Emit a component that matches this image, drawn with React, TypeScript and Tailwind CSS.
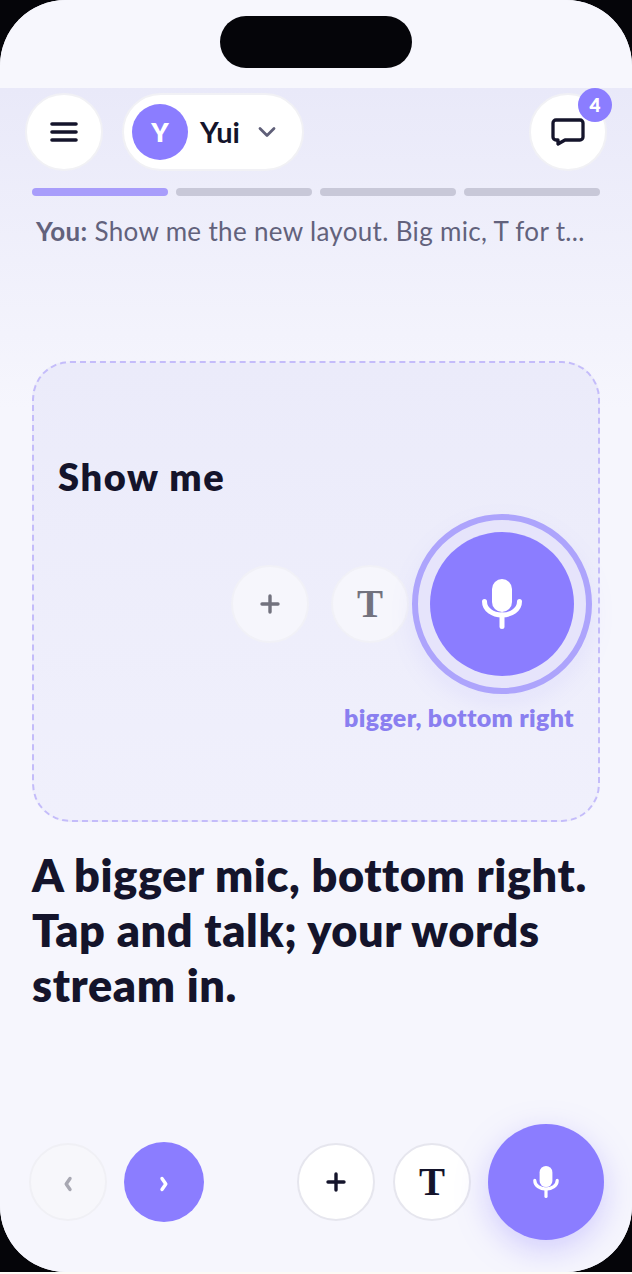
import React from "react";

const Mic = ({ size }: { size: number }) => (
  <svg width={size} height={size} viewBox="0 0 40 50" fill="none">
    <rect x="10" y="0" width="20" height="33" rx="10" fill="#fff" />
    <path d="M2.5 22.5c0 8 8 13.5 17.5 13.5s17.5-5.5 17.5-13.5" stroke="#fff" strokeWidth="5" strokeLinecap="round" />
    <path d="M20 36v11.5" stroke="#fff" strokeWidth="5" strokeLinecap="round" />
  </svg>
);

const Plus = ({ color, size }: { color: string; size: number }) => (
  <svg width={size} height={size} viewBox="0 0 20 20" fill="none">
    <path d="M10 2v16M2 10h16" stroke={color} strokeWidth="3.4" strokeLinecap="round" />
  </svg>
);

export default function App() {
  return (
    <div className="w-[632px] h-[1274px] bg-[#fdfaf5] overflow-hidden" style={{ fontFamily: 'Lato, sans-serif' }}>
      <div className="bg-[#050509] h-[1272px]">
      <div className="w-[632px] h-[1272px] rounded-[66px] overflow-hidden bg-[#f6f6fd] flex flex-col">
        <div className="h-[88px] shrink-0 flex justify-center pt-4 bg-[#f7f7fd]">
          <div className="w-[192px] h-[52px] rounded-[26px] bg-[#050509]" />
        </div>
        <div className="flex-1 flex flex-col bg-[linear-gradient(180deg,#e9e9f9_0px,#f6f6fd_320px)]">
          <div className="flex items-center px-[25px] h-[88px] shrink-0">
            <button className="w-[78px] h-[78px] rounded-full bg-white border-2 border-[#f1f1f5] flex items-center justify-center">
              <svg width="28" height="22" viewBox="0 0 28 22" fill="none">
                <path d="M2 3h24M2 11h24M2 19h24" stroke="#14142b" strokeWidth="3.6" strokeLinecap="round" />
              </svg>
            </button>
            <div className="ml-[19px] w-[182px] h-[78px] rounded-full bg-white border-2 border-[#f1f1f5] flex items-center pl-[8px]">
              <div className="w-[56px] h-[56px] rounded-full bg-[#8b7dff] flex items-center justify-center text-white font-extrabold text-[26px]">Y</div>
              <span className="ml-[12px] text-[29px] font-bold text-[#14142b]">Yui</span>
              <svg className="ml-[18px]" width="18" height="12" viewBox="0 0 18 12" fill="none">
                <path d="M2 2.5l7 7 7-7" stroke="#5f5f78" strokeWidth="2.8" strokeLinecap="round" strokeLinejoin="round" />
              </svg>
            </div>
            <button className="relative ml-auto w-[78px] h-[78px] rounded-full bg-white border-2 border-[#f1f1f5] flex items-center justify-center">
              <svg width="34" height="28" viewBox="0 0 34 28" fill="none">
                <path d="M5 2h24a3 3 0 0 1 3 3v14a3 3 0 0 1-3 3H14l-7 4v-4H5a3 3 0 0 1-3-3V5a3 3 0 0 1 3-3z" stroke="#14142b" strokeWidth="3.3" strokeLinejoin="round" />
              </svg>
              <span className="absolute top-[-7px] right-[-7px] w-[34px] h-[34px] rounded-full bg-[#8b7dff] text-white text-[19px] font-extrabold flex items-center justify-center">4</span>
            </button>
          </div>
          <div className="flex gap-2 px-8 mt-[12px] shrink-0">
            <div className="flex-1 h-2 rounded-full bg-[#a89dfb]" />
            <div className="flex-1 h-2 rounded-full bg-[#c8c8d8]" />
            <div className="flex-1 h-2 rounded-full bg-[#c8c8d8]" />
            <div className="flex-1 h-2 rounded-full bg-[#c8c8d8]" />
          </div>
          <p className="mx-9 mt-[17px] text-[26px] leading-[36px] text-[#62627c] whitespace-nowrap tracking-[0.33px]">
            <span className="font-bold">You:</span> Show me the new layout. Big mic, T for t...
          </p>
          <div className="mx-8 mt-[112px] h-[461px] shrink-0 rounded-[38px] border-2 border-dashed border-[#c4bcfa] bg-[linear-gradient(180deg,#ebebfa,#f0f0fc)] flex flex-col pl-[24px] pr-[24px]">
            <div className="mt-[89px] text-[38px] leading-[48px] font-extrabold text-[#14142b] tracking-[1.6px]">Show me</div>
            <div className="mt-[14px] flex items-center justify-end -mr-[18px]">
              <div className="w-[78px] h-[78px] rounded-full bg-[#f6f6fc] border-2 border-[#f1f1f7] flex items-center justify-center">
                <Plus color="#72727e" size={20} />
              </div>
              <div className="ml-[22px] w-[78px] h-[78px] rounded-full bg-[#f6f6fc] border-2 border-[#f1f1f7] flex items-center justify-center text-[#72727e] text-[39px] font-bold" style={{ fontFamily: '"Liberation Serif", serif' }}>T</div>
              <div className="ml-[3px] w-[180px] h-[180px] rounded-full border-[6px] border-[#ada4fc] bg-[#e6e4fb] flex items-center justify-center shadow-[0_10px_24px_rgba(139,125,255,0.1)]">
                <div className="w-[144px] h-[144px] rounded-full bg-[#8b7dff] flex items-center justify-center">
                  <Mic size={50} />
                </div>
              </div>
            </div>
            <div className="mt-[7px] text-right text-[25px] leading-[32px] font-extrabold text-[#8a7ff0] tracking-[0.3px]">bigger, bottom right</div>
          </div>
          <h1 className="mx-8 mt-[26px] text-[45px] leading-[55px] font-extrabold text-[#14142b] tracking-[0.62px]">
            A bigger mic, bottom right. Tap and talk; your words stream in.
          </h1>
          <div className="mt-auto mb-[32px] pl-[29px] flex items-center">
            <button className="w-[78px] h-[78px] rounded-full bg-[#f7f7fb] border-2 border-[#f0f0f5] flex items-center justify-center">
              <svg className="mt-1" width="10" height="16" viewBox="0 0 10 16" fill="none"><path d="M7 2.5L3.2 8 7 13.5" stroke="#a8a8b2" strokeWidth="3.4" strokeLinecap="round" strokeLinejoin="round" /></svg>
            </button>
            <button className="ml-[17px] w-[80px] h-[80px] rounded-full bg-[#8b7dff] flex items-center justify-center">
              <svg className="mt-1" width="10" height="16" viewBox="0 0 10 16" fill="none"><path d="M3 2.5L6.8 8 3 13.5" stroke="#fff" strokeWidth="3.4" strokeLinecap="round" strokeLinejoin="round" /></svg>
            </button>
            <button className="ml-[93px] w-[78px] h-[78px] rounded-full bg-white border-2 border-[#e6e6ee] flex items-center justify-center">
              <Plus color="#14142b" size={20} />
            </button>
            <button className="ml-[18px] w-[78px] h-[78px] rounded-full bg-white border-2 border-[#e6e6ee] flex items-center justify-center text-[#14142b] text-[39px] font-bold" style={{ fontFamily: '"Liberation Serif", serif' }}>T</button>
            <button className="ml-[17px] w-[116px] h-[116px] rounded-full bg-[#8b7dff] flex items-center justify-center shadow-[0_10px_32px_rgba(139,125,255,0.35)]">
              <Mic size={32} />
            </button>
          </div>
        </div>
      </div>
      </div>
    </div>
  );
}
